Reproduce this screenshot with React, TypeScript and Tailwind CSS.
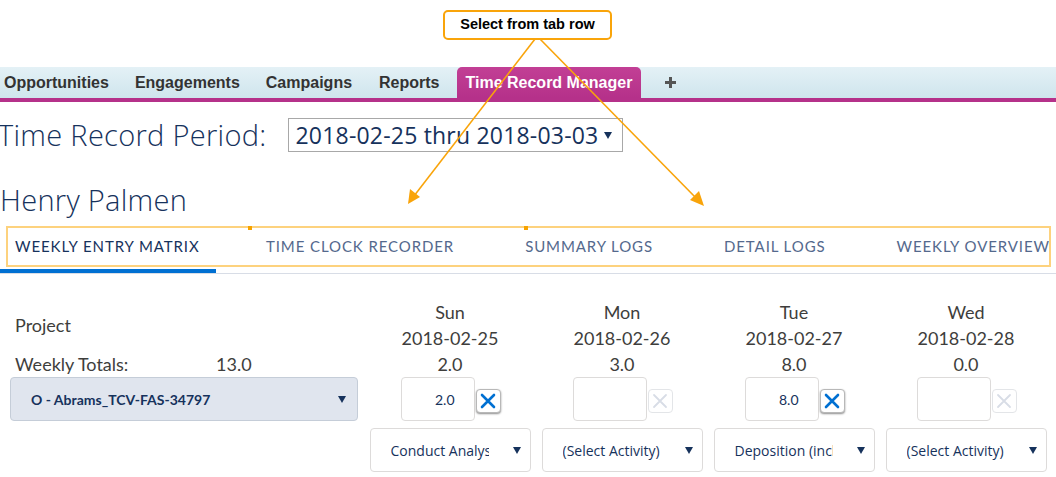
import React from "react";

const days = [
  { name: "Sun", date: "2018-02-25", total: "2.0", value: "2.0", activity: "Conduct Analysis", filled: true },
  { name: "Mon", date: "2018-02-26", total: "3.0", value: "", activity: "(Select Activity)", filled: false },
  { name: "Tue", date: "2018-02-27", total: "8.0", value: "8.0", activity: "Deposition (incl. prep)", filled: true },
  { name: "Wed", date: "2018-02-28", total: "0.0", value: "", activity: "(Select Activity)", filled: false },
];

const tabs = ["Weekly Entry Matrix", "Time Clock Recorder", "Summary Logs", "Detail Logs", "Weekly Overview"];

function Caret({ className = "" }: { className?: string }) {
  return (
    <svg width="8" height="7" viewBox="0 0 8 7" className={className}>
      <path d="M0 0h8L4 7z" fill="#16325c" />
    </svg>
  );
}

function ClearButton({ active }: { active: boolean }) {
  return (
    <button
      className={
        "ml-[1px] mt-[12px] flex h-[24px] w-[25px] items-center justify-center rounded-[4px] border bg-white " +
        (active ? "border-[#b8b8b8] shadow-[0_1px_2px_rgba(0,0,0,0.45)]" : "border-[#e3e5e8]")
      }
    >
      <svg width="16" height="16" viewBox="0 0 16 16">
        <path
          d="M2 2L14 14M14 2L2 14"
          stroke={active ? "#0070d2" : "#d8dde6"}
          strokeWidth={active ? 2.6 : 1.8}
          strokeLinecap="round"
        />
      </svg>
    </button>
  );
}

export default function App() {
  return (
    <div className="relative h-[477px] w-[1056px] overflow-hidden bg-white font-['Lato',sans-serif]">
      <div className="h-[67px]" />

      {/* app nav */}
      <div className="flex h-[35px] items-stretch border-b-[4px] border-[#b5318a] bg-gradient-to-b from-[#e4f1f6] to-[#cfe5ed] pl-[4px] font-['Liberation_Sans',Arial,sans-serif] text-[16px] font-bold text-[#333]">
        <span className="mr-[26px] flex items-center">Opportunities</span>
        <span className="mr-[26px] flex items-center">Engagements</span>
        <span className="mr-[27px] flex items-center">Campaigns</span>
        <span className="mr-[17px] flex items-center">Reports</span>
        <span className="flex items-center rounded-t-[5px] bg-gradient-to-b from-[#c23f95] to-[#b5318a] px-[9px] text-white">
          Time Record Manager
        </span>
        <span className="ml-[24px] flex items-center">
          <svg width="11" height="11" viewBox="0 0 11 11">
            <path d="M4 0h3v4h4v3H7v4H4V7H0V4h4z" fill="#555" />
          </svg>
        </span>
      </div>

      {/* period */}
      <div className="mt-[16px] flex items-center">
        <h1 className="ml-[-2px] font-['Open_Sans',sans-serif] text-[29px] font-light leading-[34px] tracking-[0.3px] text-[#16325c]">
          Time Record Period:
        </h1>
        <div className="ml-[22px] flex h-[34px] w-[335px] items-center border border-[#a8a8a8] pl-[6px] font-['Open_Sans',sans-serif] text-[23px] tracking-[0.2px] text-[#16325c]">
          <span>2018-02-25 thru 2018-03-03</span>
          <Caret className="ml-[6px]" />
        </div>
      </div>

      <h2 className="mt-[31px] h-[40px] font-['Open_Sans',sans-serif] text-[29px] font-light leading-[34px] tracking-[0.3px] text-[#16325c]">
        Henry Palmen
      </h2>

      {/* tab row */}
      <div className="flex h-[51px] items-stretch border-b border-[#d8dde6]">
        {tabs.map((t, i) => (
          <div
            key={t}
            className={
              "flex items-center text-[15px] uppercase tracking-[0.06em] " +
              (i === 0
                ? "w-[216px] border-b-[4px] border-[#0070d2] pl-[15px] text-[#16325c]"
                : (i === 1 ? "ml-[50px]" : "ml-[71px]") + " pb-[4px] text-[#54698d]")
            }
          >
            {t}
          </div>
        ))}
      </div>

      {/* matrix */}
      <div className="mt-[25px] flex text-[18px] text-[#3e3e3c]">
        <div className="w-[364px]">
          <div className="flex h-[52px] items-center pl-[15px]">Project</div>
          <div className="flex h-[26px] items-center pl-[15px]">
            <span className="w-[201px]">Weekly Totals:</span>
            <span>13.0</span>
          </div>
          <div className="ml-[10px] flex h-[44px] w-[348px] items-center justify-between rounded-[4px] border border-[#c5cdd8] bg-[#e0e5ee] pl-[20px] pr-[11px] text-[14px] font-bold text-[#16325c]">
            <span>O - Abrams_TCV-FAS-34797</span>
            <Caret />
          </div>
        </div>

        {days.map((d) => (
          <div key={d.name} className="flex w-[172px] flex-col items-center">
            <div className="h-[26px] leading-[26px]">{d.name}</div>
            <div className="h-[26px] leading-[26px]">{d.date}</div>
            <div className="h-[26px] leading-[26px]">{d.total}</div>
            <div className="flex pl-[1px]">
              <div className="flex h-[44px] w-[74px] items-center justify-end rounded-[4px] border border-[#dddbda] pr-[19px] text-[14px] text-[#16325c]">
                {d.value}
              </div>
              <ClearButton active={d.filled} />
            </div>
            <div className="mt-[7px] flex h-[44px] w-[161px] shrink-0 items-center rounded-[4px] border border-[#dddbda] pl-[20px] pr-[9px] font-['Open_Sans',sans-serif] text-[14px] text-[#16325c]">
              <span className="w-[98px] overflow-hidden whitespace-nowrap">{d.activity}</span>
              <Caret className="ml-auto" />
            </div>
          </div>
        ))}
      </div>

      {/* annotation: highlight box */}
      <div className="pointer-events-none absolute left-[6px] top-[226px] h-[41px] w-[1045px] border-2 border-[#fdd27e]" />
      <div className="absolute left-[248px] top-[226px] h-[4px] w-[4px] bg-[#f7a300]" />
      <div className="absolute left-[524px] top-[226px] h-[4px] w-[4px] bg-[#f7a300]" />

      {/* annotation: arrows */}
      <svg className="pointer-events-none absolute left-0 top-0" width="1056" height="477">
        <line x1="535" y1="39" x2="414" y2="196" stroke="#f9a40a" strokeWidth="1.6" />
        <path d="M408 204 L410 189 L420 197 Z" fill="#f9a40a" />
        <line x1="540" y1="39" x2="697" y2="199" stroke="#f9a40a" strokeWidth="1.6" />
        <path d="M704 206 L690 200 L699 191 Z" fill="#f9a40a" />
      </svg>

      {/* annotation: callout */}
      <div className="absolute left-[443px] top-[10px] flex h-[30px] w-[169px] items-center justify-center rounded-[5px] border-2 border-[#f9a40a] bg-white font-['Liberation_Sans',Arial,sans-serif] text-[14.5px] font-bold text-black">
        Select from tab row
      </div>
    </div>
  );
}
